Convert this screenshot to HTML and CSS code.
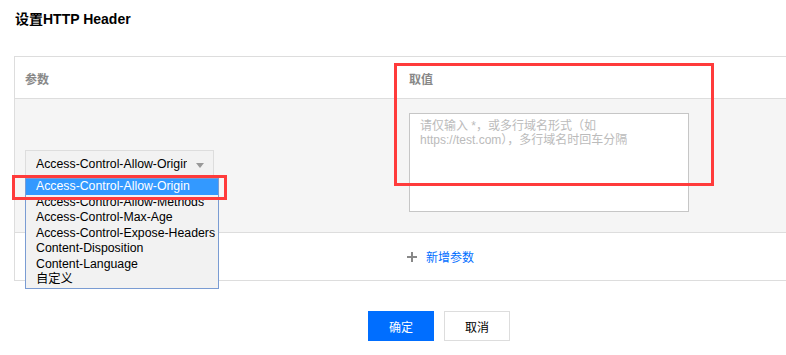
FILE: index.html
```html
<!DOCTYPE html>
<html lang="zh">
<head>
<meta charset="utf-8">
<title>设置HTTP Header</title>
<link rel="stylesheet" href="styles.css">
</head>
<body>
<div class="page">
  <h1 class="title">设置HTTP Header</h1>
  <div class="table">
    <div class="row head">
      <div class="col param">参数</div>
      <div class="col value">取值</div>
    </div>
    <div class="row body">
      <div class="col param">
        <div class="select">
          <span class="select-text">Access-Control-Allow-Origin</span>
          <span class="caret"></span>
        </div>
      </div>
      <div class="col value">
        <div class="textarea">请仅输入 *，或多行域名形式（如<br>https://test.com），多行域名时回车分隔</div>
      </div>
    </div>
    <div class="row add">
      <div class="col param"></div>
      <div class="col value">
        <span class="add-link">
          <svg class="plus" width="10" height="10" viewBox="0 0 10 10"><path d="M5 0V10M0 5H10" stroke="#888" stroke-width="2"/></svg>
          <span>新增参数</span>
        </span>
      </div>
    </div>
  </div>
  <div class="footer">
    <button class="btn primary">确定</button>
    <button class="btn">取消</button>
  </div>

  <ul class="dropdown">
    <li class="active">Access-Control-Allow-Origin</li>
    <li>Access-Control-Allow-Methods</li>
    <li>Access-Control-Max-Age</li>
    <li>Access-Control-Expose-Headers</li>
    <li>Content-Disposition</li>
    <li>Content-Language</li>
    <li>自定义</li>
  </ul>
  <div class="mark mark-option"></div>
  <div class="mark mark-value"></div>
</div>
</body>
</html>
```
FILE: styles.css
```css
* { box-sizing: border-box; }
html, body {
  margin: 0;
  padding: 0;
  background: #fff;
  overflow: hidden;
}
body {
  font-family: "Liberation Sans", Arial, "Noto Sans CJK SC", sans-serif;
  font-size: 12px;
  color: #000;
}
.page {
  position: relative;
  width: 786px;
  height: 355px;
  overflow: hidden;
}
.title {
  margin: 0;
  padding: 10px 15px 0;
  height: 56px;
  font-size: 14px;
  font-weight: bold;
  line-height: 18px;
  color: #000;
}
.table {
  margin-left: 14px;
  width: 772px;
  border-left: 1px solid #ddd;
  border-top: 1px solid #ddd;
}
.row {
  display: flex;
  border-bottom: 1px solid #ddd;
}
.col.param { width: 382px; padding-left: 10px; }
.col.value { flex: 1; padding-left: 12px; }
.row.head {
  height: 42px;
  align-items: center;
  color: #888;
  font-weight: bold;
}
.row.head .col { padding-top: 1px; }
.row.body {
  height: 134px;
  background: #f5f5f5;
}
.row.body .col.param { padding-top: 51px; }
.row.body .col.value { padding-top: 14px; }
.select {
  width: 189px;
  height: 28px;
  border: 1px solid #ddd;
  background: #f2f2f2;
  display: flex;
  align-items: center;
  padding-left: 10px;
  position: relative;
}
.select-text {
  width: 151px;
  overflow: hidden;
  white-space: nowrap;
  font-size: 12.3px;
  color: #000;
}
.caret {
  position: absolute;
  left: 170px;
  top: 12px;
  width: 0;
  height: 0;
  border-left: 4px solid transparent;
  border-right: 4px solid transparent;
  border-top: 5px solid #999;
}
.textarea {
  width: 280px;
  height: 99px;
  border: 1px solid #c6c6c6;
  background: #fff;
  padding: 5px 10px;
  color: #bbb;
  line-height: 14px;
  font-size: 12px;
}
.row.add {
  height: 48px;
  align-items: center;
}
.add-link {
  display: inline-flex;
  align-items: center;
  gap: 9px;
  color: #006eff;
  margin-left: -2px;
}
.footer {
  margin-left: 14px;
  width: 772px;
  display: flex;
  justify-content: center;
  gap: 10px;
  padding: 30px 0 0 78px;
}
.btn {
  width: 66px;
  height: 30px;
  border: 1px solid #ddd;
  background: #fff;
  color: #000;
  font-family: inherit;
  font-size: 12px;
  padding: 0;
}
.btn.primary {
  background: #006eff;
  border-color: #006eff;
  color: #fff;
}
.dropdown {
  position: absolute;
  left: 25px;
  top: 178px;
  width: 194px;
  margin: 0;
  padding: 0;
  list-style: none;
  background: #f2f2f2;
  border: 1px solid #7a9cd3;
  font-size: 12.3px;
  line-height: 15.5px;
}
.dropdown li {
  padding-left: 10px;
  white-space: nowrap;
  height: 15.5px;
}
.dropdown li.active {
  background: #3399ff;
  color: #fff;
}
.mark {
  position: absolute;
  border: 3px solid #ff3b3b;
}
.mark-option {
  left: 12px;
  top: 175px;
  width: 215px;
  height: 25px;
}
.mark-value {
  left: 394px;
  top: 63px;
  width: 320px;
  height: 123px;
}
```
